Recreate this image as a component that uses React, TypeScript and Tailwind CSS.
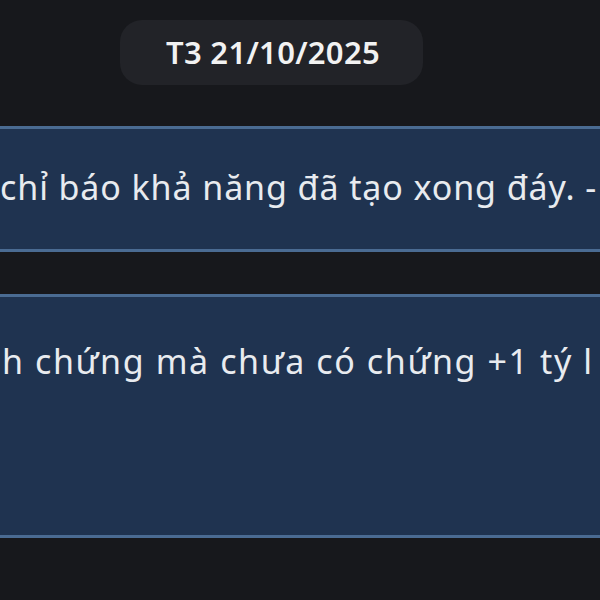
import React from "react";

export default function App() {
  const font = { fontFamily: '"Noto Sans", "Open Sans", sans-serif' };
  return (
    <div className="w-[600px] h-[600px] overflow-hidden bg-[#17181c] flex flex-col" style={font}>
      <div className="pt-[20px] pl-[120px]">
        <div className="w-[303px] h-[65px] rounded-[22px] bg-[#222328] flex items-center justify-center">
          <span className="text-[31px] font-semibold text-[#f2f2f2] tracking-[0.3px] pl-[3px]">T3 21/10/2025</span>
        </div>
      </div>
      <div className="mt-[41px] h-[126px] bg-[#1f3350] border-y-[3px] border-[#4a6b92] flex items-center overflow-hidden">
        <span className="whitespace-nowrap text-[34px] tracking-[0.9px] text-[#e8ebef] pb-[4px]">
          chỉ báo khả năng đã tạo xong đáy. -
        </span>
      </div>
      <div className="mt-[42px] h-[244px] bg-[#1f3350] border-y-[3px] border-[#4a6b92] overflow-hidden">
        <div className="whitespace-nowrap text-[34px] tracking-[1.6px] text-[#e8ebef] pt-[42px] leading-[44px] pl-[2px]">
          h chứng mà chưa có chứng +1 tý l
        </div>
      </div>
    </div>
  );
}
